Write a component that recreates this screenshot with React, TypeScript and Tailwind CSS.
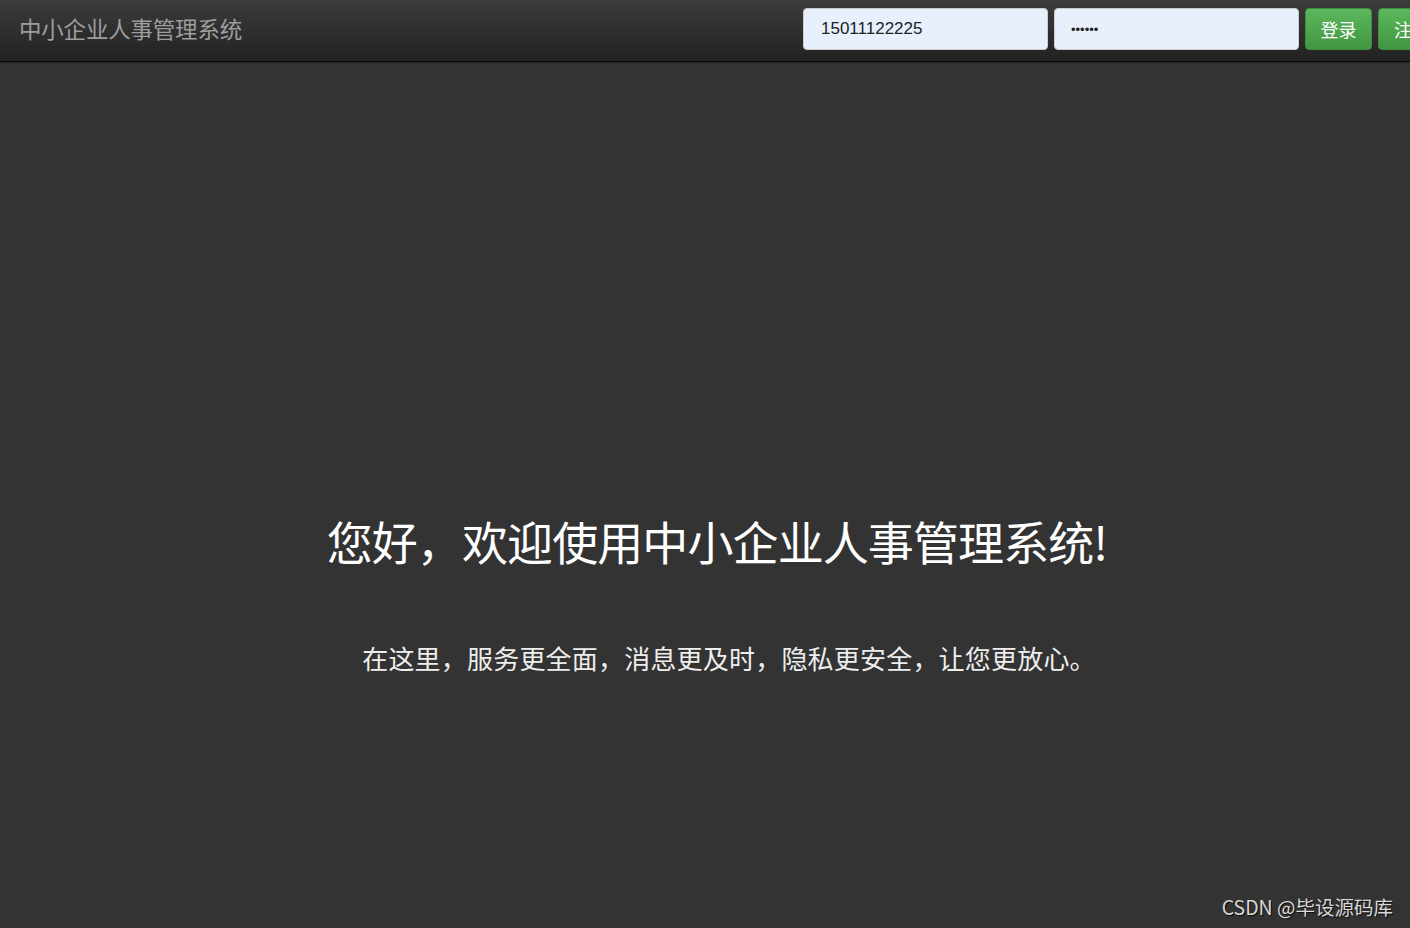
import React from "react";

export default function App() {
  const cjk = { fontFamily: '"Microsoft YaHei", "Noto Sans CJK SC", "Liberation Sans", sans-serif' };
  return (
    <div className="w-[1410px] h-[928px] bg-[#333333] overflow-hidden relative" style={cjk}>
      <div className="h-[62px] flex items-start justify-between bg-gradient-to-b from-[#3c3c3c] to-[#222222] border-b border-[#080808] shadow-[0_1px_2px_rgba(0,0,0,0.3)]">
        <div className="pl-[19px] pt-[12px] text-[22.5px] leading-[32px] text-[#9d9d9d] tracking-[-0.2px]">中小企业人事管理系统</div>
        <div className="flex items-center gap-[6px] pt-[8px] mr-[-35px]">
          <input
            readOnly
            value="15011122225"
            className="w-[245px] h-[42px] rounded-[4px] bg-[#e8f0fe] border border-[#cccccc] px-[17px] text-[17px] text-[#222] outline-none"
            style={{ fontFamily: '"Liberation Sans", Arial, sans-serif' }}
          />
          <input
            readOnly
            type="password"
            value="123456"
            className="w-[245px] h-[42px] rounded-[4px] bg-[#e8f0fe] border border-[#cccccc] px-[16px] text-[13px] text-[#222] outline-none"
            style={{ fontFamily: '"Liberation Sans", Arial, sans-serif' }}
          />
          <button className="w-[67px] h-[42px] rounded-[4px] bg-gradient-to-b from-[#5cb85c] to-[#419641] border border-[#3e8f3e] text-white text-[18px]">登录</button>
          <button className="w-[67px] h-[42px] rounded-[4px] bg-gradient-to-b from-[#5cb85c] to-[#419641] border border-[#3e8f3e] text-white text-[18px] text-left pl-[15px]">注册</button>
        </div>
      </div>
      <div className="flex flex-col items-center pt-[446px]">
        <h1 className="text-[46px] text-white leading-[64px] tracking-[-0.9px] pl-[24px]">您好，欢迎使用中小企业人事管理系统!</h1>
        <p className="mt-[68px] text-[26px] text-[#eeeeee] leading-[36px] tracking-[0.2px] pl-[48px]">在这里，服务更全面，消息更及时，隐私更安全，让您更放心。</p>
      </div>
      <div className="absolute right-[17px] bottom-[7px] text-[19.5px] text-[#d8d8d8] [text-shadow:1px_1px_1px_rgba(0,0,0,0.8)]">CSDN @毕设源码库</div>
    </div>
  );
}
